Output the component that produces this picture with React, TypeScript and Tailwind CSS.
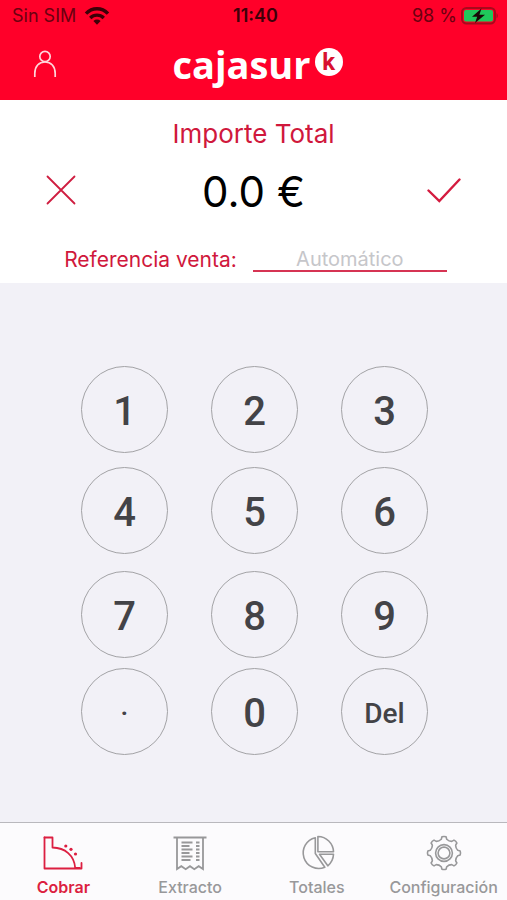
import { useState } from "react";
import type { ReactNode } from "react";

const KEYS = ["1", "2", "3", "4", "5", "6", "7", "8", "9", ".", "0", "Del"];

function keyText(key: string): string {
  if (key === ".") return "pb-3 text-[28px]";
  if (key === "Del") return "pt-1 text-[28px]";
  return "pt-1 text-[40px]";
}

function WifiIcon() {
  return (
    <svg width="26" height="20" viewBox="0 0 26 20" fill="none" stroke="#3d0008" strokeWidth="3.400" aria-hidden="true">
      <path d="M2 7.600C8.200 1.200 17.800 1.200 24 7.600" />
      <path d="M6.200 12c4-3.800 9.600-3.800 13.600 0" />
      <path d="M13 18.800l-3.600-3.900c2.100-1.800 5.100-1.800 7.200 0z" fill="#3d0008" stroke="none" />
    </svg>
  );
}

function BatteryIcon() {
  return (
    <svg width="38" height="18" viewBox="0 0 38 18" aria-hidden="true">
      <rect x="1" y="1" width="33" height="15.500" rx="4.500" fill="none" stroke="#a80a1c" strokeWidth="2" />
      <rect x="3" y="3" width="29" height="11.500" rx="2" fill="#1fc95b" />
      <path d="M35.500 6.200c1.800.6 1.800 4.400 0 5z" fill="#a80a1c" />
      <path d="M20.500 1.500l-9.500 8.200h5.200l-2.200 6.300 10-8.300h-5.600z" fill="#180806" />
    </svg>
  );
}

function UserIcon() {
  return (
    <svg width="24" height="28" viewBox="0 0 24 28" fill="none" stroke="#ffd5da" strokeWidth="1.700" aria-hidden="true">
      <circle cx="12" cy="6.500" r="5.200" />
      <path d="M1.800 27v-3.600C1.800 16.200 6 12 12 12s10.200 4.200 10.200 11.400V27" />
    </svg>
  );
}

function RegisterIcon() {
  return (
    <svg width="40" height="36" viewBox="0 0 40 36" fill="none" stroke="#dc1f41" strokeWidth="1.800" strokeLinejoin="round" strokeLinecap="round" aria-hidden="true">
      <path d="M1.500 2.500h8v10c12.500.2 21.800 8 22.700 20.500h4.500" />
      <path d="M1.500 2.500v31h37v-5.500" />
      <g fill="#dc1f41" stroke="none">
        <circle cx="22.800" cy="11" r="1.600" />
        <circle cx="28" cy="14.300" r="1.600" />
        <circle cx="32.500" cy="19" r="1.600" />
      </g>
    </svg>
  );
}

function ReceiptIcon() {
  return (
    <svg width="34" height="36" viewBox="0 0 34 36" fill="none" stroke="#98989a" strokeWidth="1.800" aria-hidden="true">
      <path d="M.5 2.500h33" strokeWidth="2" />
      <path d="M4 2.500V34l4.300-2.800 4.400 3 4.300-3 4.300 3 4.400-3L30 34V2.500" />
      <path d="M8.500 7.500h11M8.500 11h8M8.500 14.500h11M8.500 18h8M8.500 21.500h11M8.500 25h9" />
      <path d="M23 7.500h3.500M23 11h3.500M23 14.500h3.500M23 18h3.500M23 21.500h3.500M23 25h3.500" />
    </svg>
  );
}

function PieIcon() {
  return (
    <svg width="36" height="36" viewBox="0 0 36 36" fill="none" stroke="#98989a" strokeWidth="1.600" strokeLinejoin="round" aria-hidden="true">
      <path d="M16.300 2.700A15.600 15.600 0 1 0 25.800 32.300L16.300 18.500z" />
      <path d="M18.900 1.500A15.800 15.800 0 0 1 34.500 16.800H18.900z" />
      <path d="M20.500 19.300h14c-.2 4.600-2.300 8.700-5.700 11.500z" />
    </svg>
  );
}

function gearPath(teeth: number): string {
  const points: string[] = [];
  const step = (Math.PI * 2) / teeth;
  const at = (angle: number, r: number) =>
    `${(18 + r * Math.sin(angle)).toFixed(2)} ${(18 - r * Math.cos(angle)).toFixed(2)}`;
  for (let i = 0; i < teeth; i++) {
    const a = i * step;
    points.push(`${i === 0 ? "M" : "L"}${at(a - step * 0.16, 16.3)}`);
    points.push(`Q${at(a, 16.9)} ${at(a + step * 0.16, 16.3)}`);
    points.push(`L${at(a + step * 0.25, 14)}`);
    points.push(`Q${at(a + step * 0.5, 12.6)} ${at(a + step * 0.75, 14)}`);
  }
  return `${points.join("")}Z`;
}

function GearIcon() {
  return (
    <svg width="36" height="36" viewBox="0 0 36 36" fill="none" stroke="#98989a" strokeWidth="1.600" strokeLinejoin="round" aria-hidden="true">
      <path d={gearPath(8)} />
      <circle cx="18" cy="18" r="8.400" />
      <circle cx="18" cy="18" r="5.900" />
    </svg>
  );
}

const TABS: { label: string; icon: ReactNode }[] = [
  { label: "Cobrar", icon: <RegisterIcon /> },
  { label: "Extracto", icon: <ReceiptIcon /> },
  { label: "Totales", icon: <PieIcon /> },
  { label: "Configuración", icon: <GearIcon /> },
];

export default function App() {
  const [amount, setAmount] = useState("0.0");

  const press = (key: string) => {
    if (key === "Del") {
      setAmount((v) => (v.length > 1 && v !== "0.0" ? v.slice(0, -1) : "0.0"));
    } else {
      setAmount((v) => (v === "0.0" ? key : v + key));
    }
  };

  return (
    <div className="flex min-h-screen flex-col bg-[#f2f1f7] font-['Inter','Liberation_Sans',sans-serif]">
      <header className="bg-[#ff0029] pb-2">
        <div className="grid h-8 grid-cols-[1fr_auto_1fr] items-center pr-2 pl-3 text-lg text-[#6b0010]">
          <div className="flex items-center gap-2">
            <span>Sin SIM</span>
            <WifiIcon />
          </div>
          <span className="font-semibold text-[#3d0008]">11:40</span>
          <div className="flex items-center justify-end gap-1">
            <span>98 %</span>
            <BatteryIcon />
          </div>
        </div>
        <div className="grid h-[60px] grid-cols-[1fr_auto_1fr] items-center px-[33px] pt-1">
          <button type="button" aria-label="Usuario" className="w-6">
            <UserIcon />
          </button>
          <div className="flex items-center gap-1 pl-2 text-white">
            <span className="font-['Open_Sans','Noto_Sans',sans-serif] text-[38px] leading-10 font-bold">cajasur</span>
            <span className="mb-1 flex size-7 items-center justify-center rounded-full bg-white font-['Roboto','Liberation_Sans',sans-serif] text-2xl leading-7 font-bold text-[#d8102f]">
              k
            </span>
          </div>
        </div>
      </header>

      <main className="flex flex-1 flex-col">
        <section className="bg-white pt-[18px] pb-[7px]">
          <h1 className="text-center text-[26px] leading-8 text-[#d0183c]">Importe Total</h1>
          <div className="flex h-20 items-center justify-between px-[46px]">
            <button type="button" aria-label="Cancelar" onClick={() => setAmount("0.0")} className="w-[34px]">
              <svg width="30" height="30" viewBox="0 0 30 30" stroke="#cf1d40" strokeWidth="1.800" strokeLinecap="round" aria-hidden="true">
                <path d="M1.500 1.500l27 27M28.500 1.500l-27 27" />
              </svg>
            </button>
            <output className="pt-1 text-[42px] leading-none text-black">{amount} €</output>
            <button type="button" aria-label="Aceptar" className="w-[34px]">
              <svg width="34" height="26" viewBox="0 0 34 26" fill="none" stroke="#d41b3f" strokeWidth="2.400" strokeLinecap="round" aria-hidden="true">
                <path d="M1.500 13.500l10.800 10.500L32.500 2.500" />
              </svg>
            </button>
          </div>
          <div className="flex items-end justify-center gap-4 pt-3.5 pb-1 pl-1">
            <label htmlFor="referencia" className="text-[21px] leading-6 text-[#d0183c]">
              Referencia venta:
            </label>
            <input
              id="referencia"
              type="text"
              placeholder="Automático"
              className="h-7 w-[194px] border-b-2 border-[#d63453] bg-transparent pt-1 text-center text-xl leading-6 text-black outline-none placeholder:text-[#c6c6ca]"
            />
          </div>
        </section>

        <section className="grid flex-1 grid-cols-[repeat(3,87px)] grid-rows-[101px_104px_97px_87px] content-start justify-center gap-x-[43px] pt-[83px] pb-16 pl-0.5 font-['Roboto','Liberation_Sans',sans-serif] font-medium text-[#434347]">
          {KEYS.map((key) => (
            <button
              key={key}
              type="button"
              onClick={() => press(key)}
              className={`flex size-[87px] items-center justify-center rounded-full border border-[#a3a3a6] ${keyText(key)}`}
            >
              {key}
            </button>
          ))}
        </section>
      </main>

      <nav className="grid grid-cols-4 border-t border-[#b9b8bd] bg-[#fcfbfd] pt-3 pb-px">
        {TABS.map((tab, i) => (
          <a
            key={tab.label}
            href={`#${tab.label.toLowerCase()}`}
            aria-current={i === 0 ? "page" : undefined}
            className={`flex flex-col items-center gap-1 text-base leading-6 ${
              i === 0 ? "font-semibold text-[#dc1f41]" : "font-medium text-[#98989a]"
            }`}
          >
            {tab.icon}
            <span>{tab.label}</span>
          </a>
        ))}
      </nav>
    </div>
  );
}
